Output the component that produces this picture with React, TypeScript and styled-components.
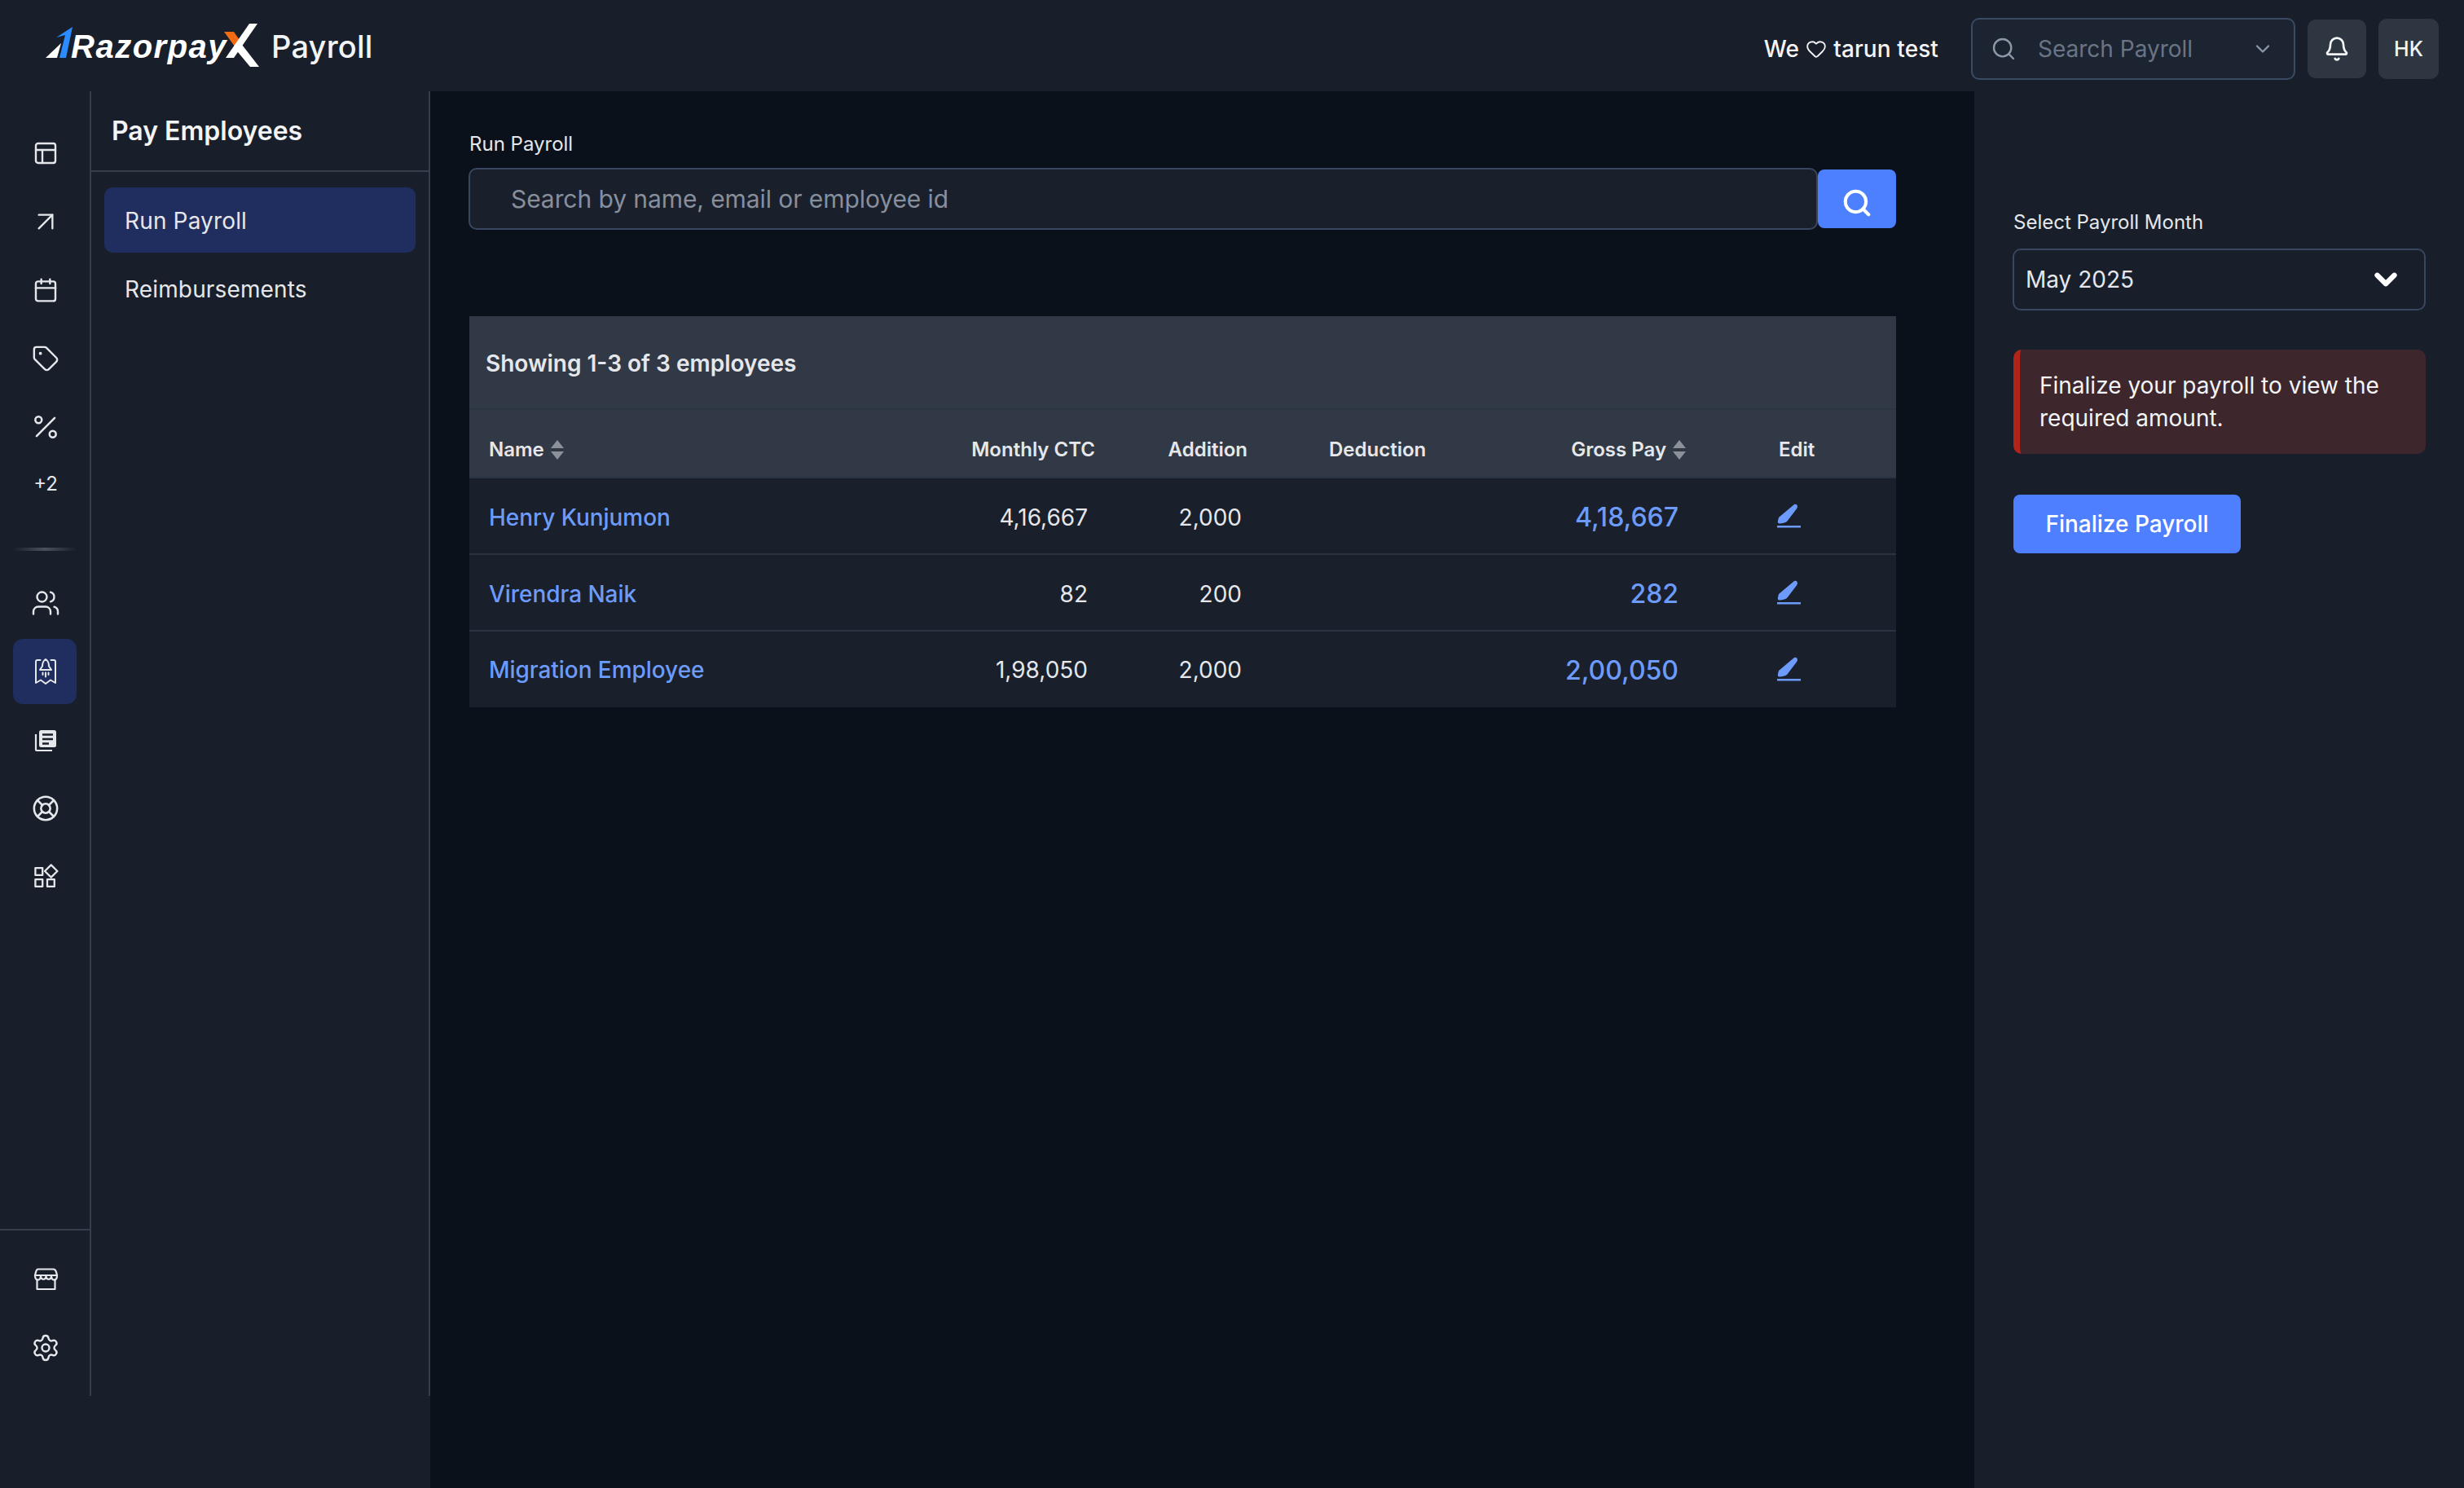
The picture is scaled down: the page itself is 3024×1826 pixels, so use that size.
import React from "react";
import styled, { createGlobalStyle } from "styled-components";
import {
  ArrowUpRight,
  Bell,
  Calendar,
  ChevronDown,
  Heart,
  LifeBuoy,
  PanelsTopLeft,
  Percent,
  Search,
  Settings,
  Tag,
  Users,
} from "lucide-react";

const Global = createGlobalStyle`
  html, body { margin: 0; padding: 0; background: #0a111a; }
  body { font-family: Inter, "Noto Sans", sans-serif; color: #e5e7eb; overflow: hidden; }
  * { box-sizing: border-box; }
`;

const Page = styled.div`
  width: 3024px;
  height: 1826px;
  display: grid;
  grid-template-rows: 112px 1fr;
  background: #0a111a;
`;

const TopBar = styled.header`
  display: flex;
  align-items: center;
  background: #181f2b;
  padding: 0 31px 0 56px;
`;

const Logo = styled.div`
  display: flex;
  align-items: flex-start;
  height: 56px;
`;

const LogoWord = styled.span`
  font-family: "Liberation Sans", Arial, sans-serif;
  font-weight: 700;
  font-style: italic;
  font-size: 40px;
  line-height: 56px;
  letter-spacing: 1.5px;
  color: #fff;
  margin: 1px 0 0 -2px;
  width: 191px;
  white-space: nowrap;
`;

const Product = styled.span`
  font-size: 38px;
  letter-spacing: 0.2px;
  font-weight: 500;
  color: #f3f4f6;
  margin: 2px 0 0 13px;
`;

const Spacer = styled.div`
  flex: 1;
`;

const TopActions = styled.div`
  display: flex;
  align-items: center;
  margin-top: 8px;
`;

const Motto = styled.div`
  display: flex;
  align-items: center;
  gap: 8px;
  font-size: 28px;
  letter-spacing: 0.1px;
  font-weight: 500;
  color: #f3f4f6;
  margin-right: 40px;
`;

const TopSearch = styled.div`
  width: 398px;
  height: 76px;
  display: flex;
  align-items: center;
  background: #1c2431;
  border: 2px solid #3a4a63;
  border-radius: 10px;
  padding: 0 24px 0 22px;
  color: #8d97a8;
`;

const TopSearchText = styled.span`
  flex: 1;
  font-size: 28px;
  margin-left: 26px;
  color: #6b7484;
`;

const SquareButton = styled.div<{ $w: number; $h: number }>`
  width: ${(p) => p.$w}px;
  height: ${(p) => p.$h}px;
  margin-left: 15px;
  display: flex;
  align-items: center;
  justify-content: center;
  background: #2e3642;
  border-radius: 10px;
  font-size: 25px;
  font-weight: 500;
  color: #f3f4f6;
`;

const Body = styled.div`
  display: grid;
  grid-template-columns: 528px 1895px 601px;
  min-height: 0;
`;

const Side = styled.aside`
  background: #181f2b;
  display: flex;
  flex-direction: column;
`;

const SideInner = styled.div`
  height: 1601px;
  display: flex;
`;

const Rail = styled.nav`
  width: 112px;
  border-right: 2px solid #373e4b;
  display: flex;
  flex-direction: column;
  padding-top: 34px;
  padding-bottom: 17px;
`;

const RailItem = styled.div`
  height: 84px;
  padding-left: 2px;
  display: flex;
  align-items: center;
  justify-content: center;
  color: #e5e7eb;
`;

const RailActive = styled.div`
  width: 78px;
  height: 80px;
  margin-left: -2px;
  padding-left: 2px;
  display: flex;
  align-items: center;
  justify-content: center;
  background: #1f2d5f;
  border-radius: 12px;
`;

const RailMore = styled.div`
  height: 54px;
  padding-left: 2px;
  display: flex;
  align-items: center;
  justify-content: center;
  font-size: 24px;
  color: #e5e7eb;
`;

const RailFade = styled.div`
  height: 4px;
  width: 78px;
  margin: 52px 0 22px 16px;
  background: linear-gradient(90deg, transparent, #4a505c 50%, transparent);
`;

const RailBottom = styled.div`
  margin-top: auto;
  padding-top: 18px;
  border-top: 2px solid #373e4b;
`;

const SubNav = styled.nav`
  width: 416px;
  border-right: 2px solid #373e4b;
`;

const SubHead = styled.div`
  height: 99px;
  display: flex;
  align-items: center;
  padding: 0 0 0 25px;
  border-bottom: 2px solid #373e4b;
  font-size: 32px;
  font-weight: 600;
  color: #f3f4f6;
`;

const SubList = styled.div`
  padding: 19px 16px;
  display: flex;
  flex-direction: column;
  gap: 4px;
`;

const SubItem = styled.div<{ $active?: boolean }>`
  height: 80px;
  display: flex;
  align-items: center;
  padding: 1px 0 0 25px;
  border-radius: 10px;
  font-size: 28px;
  letter-spacing: 0.15px;
  color: #e5e7eb;
  background: ${(p) => (p.$active ? "#1f2d5f" : "transparent")};
`;

const Main = styled.main`
  background: #0a111a;
  padding: 50px 96px 0 48px;
`;

const FieldLabel = styled.div`
  font-size: 24px;
  line-height: 30px;
  color: #e5e7eb;
`;

const SearchRow = styled.div`
  display: flex;
  align-items: center;
  margin-top: 14px;
  margin-left: -1px;
`;

const SearchField = styled.div`
  flex: 1;
  height: 76px;
  display: flex;
  align-items: center;
  background: #19202c;
  border: 2px solid #384660;
  border-radius: 10px;
  padding-left: 50px;
  font-size: 30px;
  letter-spacing: -0.08px;
  color: #878f9d;
`;

const SearchButton = styled.div`
  width: 96px;
  height: 72px;
  display: flex;
  align-items: center;
  justify-content: center;
  padding-top: 10px;
  background: #4d80ff;
  border-radius: 8px;
  color: #fff;
`;

const Table = styled.section`
  margin-top: 106px;
`;

const TableTitle = styled.div`
  height: 115px;
  display: flex;
  align-items: center;
  padding: 3px 0 0 20px;
  background: #323946;
  border-bottom: 2px solid #2b3442;
  font-size: 28px;
  font-weight: 600;
  color: #e5e7eb;
`;

const Row = styled.div<{ $head?: boolean; $last?: boolean }>`
  display: grid;
  grid-template-columns: 594px 190px 187px 353px 186px 1fr;
  align-items: center;
  padding-top: ${(p) => (p.$head ? 15 : 3)}px;
  height: ${(p) => (p.$head ? 84 : p.$last ? 93 : 94)}px;
  background: ${(p) => (p.$head ? "#323946" : "#191f2b")};
  border-bottom: 2px solid ${(p) => (p.$last ? "transparent" : p.$head ? "#2b3442" : "#2a3341")};
`;

const Th = styled.div<{ $align?: "left" | "right"; $pl?: number; $pr?: number }>`
  display: flex;
  align-items: center;
  gap: 7px;
  justify-content: ${(p) => (p.$align === "right" ? "flex-end" : "flex-start")};
  padding-left: ${(p) => p.$pl ?? 0}px;
  padding-right: ${(p) => p.$pr ?? 0}px;
  font-size: 24px;
  font-weight: 600;
  color: #e5e7eb;
`;

const Td = styled.div<{ $pr?: number; $pl?: number }>`
  text-align: ${(p) => (p.$pl ? "left" : "right")};
  padding-left: ${(p) => p.$pl ?? 0}px;
  padding-right: ${(p) => p.$pr ?? 0}px;
  font-size: 28px;
  color: #e5e7eb;
`;

const NameLink = styled.a`
  padding-left: 24px;
  font-size: 28px;
  font-weight: 500;
  letter-spacing: -0.05px;
  color: #6d9bfb;
`;

const GrossLink = styled(Td)`
  font-size: 32px;
  font-weight: 500;
  color: #6d9bfb;
`;

const EditCell = styled.div`
  display: flex;
  padding-left: 95px;
  margin-top: -3px;
`;

const RightPanel = styled.aside`
  background: #181f2b;
  padding: 146px 47px 0 48px;
`;

const PanelLabel = styled.div`
  font-size: 24px;
  line-height: 30px;
  color: #e5e7eb;
`;

const Select = styled.div`
  margin: 17px 0 0 -1px;
  height: 76px;
  display: flex;
  align-items: center;
  justify-content: space-between;
  border: 2px solid #384660;
  border-radius: 10px;
  padding: 0 26px 0 14px;
  font-size: 28px;
  color: #e5e7eb;
`;

const Alert = styled.div`
  margin-top: 48px;
  height: 128px;
  display: flex;
  align-items: center;
  background: #3d262c;
  border-left: 8px solid #b0241a;
  border-radius: 10px;
  padding: 0 40px 0 24px;
  font-size: 28px;
  line-height: 40px;
  color: #f3f4f6;
`;

const PrimaryButton = styled.div`
  margin-top: 50px;
  width: 279px;
  height: 72px;
  display: flex;
  align-items: center;
  justify-content: center;
  background: #4d7fff;
  border-radius: 8px;
  font-size: 28px;
  font-weight: 500;
  color: #fff;
`;

const MarkSvg = styled.svg`
  flex: none;
  margin-top: 2px;
`;

const CrossSvg = styled.svg`
  flex: none;
  margin-left: -6px;
`;

const RazorpayMark = () => (
  <MarkSvg width="33" height="42" viewBox="0 0 33 42" aria-hidden="true">
    <path d="M0 41 L19 23 L14 41 Z" fill="#fff" />
    <path d="M13 16 L33 3 L25 41 L17 41 L24 13 Z" fill="#2a8cff" />
  </MarkSvg>
);

const XMark = () => (
  <CrossSvg width="48" height="56" viewBox="0 0 48 56" aria-hidden="true">
    <path d="M3 11 H15 L24 24 L16 29 Z" fill="#f26a12" />
    <path d="M34 1 H44 L15 43 H5 Z" fill="#fff" />
    <path d="M22 23 L46 54 H35 L15 30 Z" fill="#fff" />
  </CrossSvg>
);

const SortIcon = () => (
  <svg width="18" height="24" viewBox="0 0 18 24" aria-hidden="true">
    <path d="M9 0 L17 10 H1 Z" fill="#8b909b" />
    <path d="M9 24 L1 14 H17 Z" fill="#8b909b" />
  </svg>
);

const PencilIcon = () => (
  <svg width="30" height="30" viewBox="0 0 30 30" aria-hidden="true">
    <path d="M21 1 C23 0 25 1 25 4 C25 5 24 6 23.5 7 L12 22 C10 23.5 6 24.5 3 24.5 C1 24.5 0.5 23 1 21 L2 17 Z" fill="#6d9bfb" />
    <rect x="0" y="27" width="29" height="2.5" fill="#6d9bfb" />
  </svg>
);

const PayslipIcon = () => (
  <svg width="32" height="32" viewBox="0 0 32 32" fill="none" stroke="#e5e7eb" strokeWidth="2" strokeLinejoin="round" strokeLinecap="round" aria-hidden="true">
    <path d="M9.5 2 H6 a2 2 0 0 0 -2 2 V30 L10 26.5 L16 31 L22 26.5 L28 30 V4 a2 2 0 0 0 -2 -2 H22.5" />
    <path d="M16 1 C19 3 20 6.5 20 9.5 L23 14 H9 L12 9.5 C12 6.5 13 3 16 1 Z" />
    <path d="M12.5 17.5 V20 M16 17.5 V22.5 M19.5 17.5 V20" />
  </svg>
);

const NewsIcon = () => (
  <svg width="32" height="32" viewBox="0 0 32 32" fill="none" aria-hidden="true">
    <rect x="8" y="4" width="21" height="21" rx="2.5" fill="#e5e7eb" />
    <path d="M12 9.5 H25 M12 15 H25 M12 20.5 H20" stroke="#181f2b" strokeWidth="2.4" />
    <path d="M4 9 V28 a1 1 0 0 0 1 1 H24" stroke="#e5e7eb" strokeWidth="2.2" />
  </svg>
);

const WidgetsIcon = () => (
  <svg width="32" height="32" viewBox="0 0 32 32" fill="none" stroke="#e5e7eb" strokeWidth="2.3" strokeLinejoin="round" aria-hidden="true">
    <rect x="3.4" y="5.1" width="8.8" height="8.8" />
    <rect x="3.4" y="19.1" width="8.8" height="8.8" />
    <rect x="18" y="19.1" width="8.8" height="8.8" />
    <path d="M22.7 1.4 L30.4 9 L22.7 16.6 L15 9 Z" />
  </svg>
);

const StoreIcon = () => (
  <svg width="32" height="32" viewBox="0 0 32 32" fill="none" stroke="#e5e7eb" strokeWidth="2.2" strokeLinejoin="round" strokeLinecap="round" aria-hidden="true">
    <path d="M6.5 3.5 H25.5 Q28 3.5 29 7 L30 11 H3 L4 7 Q5 3.5 6.5 3.5 Z" />
    <path d="M3 11 C3 18.5 10 18.5 10 11 C10 17.5 16.5 17.5 16.5 11 C16.5 17.5 23 17.5 23 11 C23 18.5 30 18.5 30 11" />
    <path d="M5.5 16.5 V28 H27.5 V16.5" />
  </svg>
);

const railIcon = { size: 32, strokeWidth: 1.8 };

const employees = [
  { name: "Henry Kunjumon", ctc: "4,16,667", add: "2,000", gross: "4,18,667" },
  { name: "Virendra Naik", ctc: "82", add: "200", gross: "282" },
  { name: "Migration Employee", ctc: "1,98,050", add: "2,000", gross: "2,00,050" },
];

export default function App() {
  return (
    <Page>
      <Global />
      <TopBar>
        <Logo>
          <RazorpayMark />
          <LogoWord>Razorpay</LogoWord>
          <XMark />
        </Logo>
        <Product>Payroll</Product>
        <Spacer />
        <TopActions>
          <Motto>
            We <Heart size={26} strokeWidth={1.7} /> tarun test
          </Motto>
          <TopSearch>
            <Search size={32} strokeWidth={1.8} />
            <TopSearchText>Search Payroll</TopSearchText>
            <ChevronDown size={28} strokeWidth={2} />
          </TopSearch>
          <SquareButton $w={72} $h={72}>
            <Bell size={32} strokeWidth={2} />
          </SquareButton>
          <SquareButton $w={74} $h={74}>HK</SquareButton>
        </TopActions>
      </TopBar>
      <Body>
        <Side>
          <SideInner>
            <Rail>
              <RailItem><PanelsTopLeft {...railIcon} /></RailItem>
              <RailItem><ArrowUpRight size={40} strokeWidth={1.4} /></RailItem>
              <RailItem><Calendar {...railIcon} /></RailItem>
              <RailItem><Tag size={34} strokeWidth={1.7} /></RailItem>
              <RailItem><Percent size={38} strokeWidth={1.6} /></RailItem>
              <RailMore>+2</RailMore>
              <RailFade />
              <RailItem><Users size={36} strokeWidth={1.6} /></RailItem>
              <RailItem><RailActive><PayslipIcon /></RailActive></RailItem>
              <RailItem><NewsIcon /></RailItem>
              <RailItem><LifeBuoy size={34} strokeWidth={1.8} /></RailItem>
              <RailItem><WidgetsIcon /></RailItem>
              <RailBottom>
                <RailItem><StoreIcon /></RailItem>
                <RailItem><Settings size={36} strokeWidth={1.6} /></RailItem>
              </RailBottom>
            </Rail>
            <SubNav>
              <SubHead>Pay Employees</SubHead>
              <SubList>
                <SubItem $active>Run Payroll</SubItem>
                <SubItem>Reimbursements</SubItem>
              </SubList>
            </SubNav>
          </SideInner>
        </Side>
        <Main>
          <FieldLabel>Run Payroll</FieldLabel>
          <SearchRow>
            <SearchField>Search by name, email or employee id</SearchField>
            <SearchButton><Search size={38} strokeWidth={2.6} /></SearchButton>
          </SearchRow>
          <Table>
            <TableTitle>Showing 1-3 of 3 employees</TableTitle>
            <Row $head>
              <Th $pl={24}>Name <SortIcon /></Th>
              <Th $align="right" $pr={16}>Monthly CTC</Th>
              <Th $align="right" $pr={16}>Addition</Th>
              <Th $pl={84}>Deduction</Th>
              <Th $align="right" $pr={16}>Gross Pay <SortIcon /></Th>
              <Th $pl={97}>Edit</Th>
            </Row>
            {employees.map((e, i) => (
              <Row key={e.name} $last={i === employees.length - 1}>
                <NameLink>{e.name}</NameLink>
                <Td $pr={25}>{e.ctc}</Td>
                <Td $pr={23}>{e.add}</Td>
                <Td />
                <GrossLink $pr={26}>{e.gross}</GrossLink>
                <EditCell><PencilIcon /></EditCell>
              </Row>
            ))}
          </Table>
        </Main>
        <RightPanel>
          <PanelLabel>Select Payroll Month</PanelLabel>
          <Select>
            May 2025
            <ChevronDown size={42} strokeWidth={3.6} color="#fff" />
          </Select>
          <Alert>Finalize your payroll to view the required amount.</Alert>
          <PrimaryButton>Finalize Payroll</PrimaryButton>
        </RightPanel>
      </Body>
    </Page>
  );
}
